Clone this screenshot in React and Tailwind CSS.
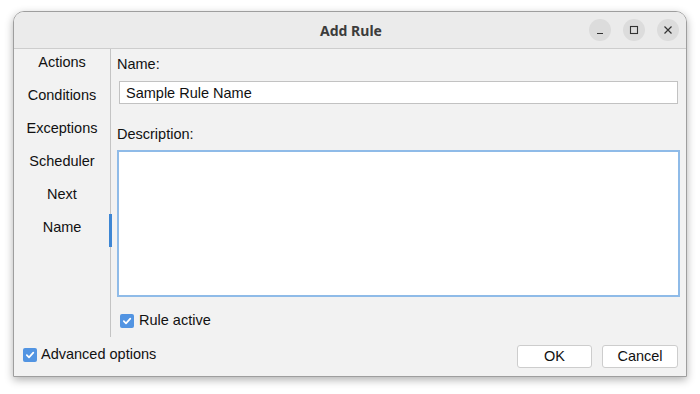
import React from 'react';

const tabs = ['Actions', 'Conditions', 'Exceptions', 'Scheduler', 'Next', 'Name'];

function Check() {
    return (
        <span className="w-[14px] h-[14px] rounded-[2px] bg-[#5294e2] flex items-center justify-center shrink-0">
            <svg width="10" height="10" viewBox="0 0 10 10" fill="none">
                <path d="M1.8 5.2 L4 7.4 L8.3 2.6" stroke="white" strokeWidth="1.7" strokeLinecap="round" strokeLinejoin="round" />
            </svg>
        </span>
    );
}

function TitleButton({ children }) {
    return (
        <div className="w-[22px] h-[22px] rounded-full bg-[#dcdcdc] flex items-center justify-center text-[#333]">
            {children}
        </div>
    );
}

export default function App() {
    const active = 'Name';

    return (
        <div className="w-[700px] h-[394px] bg-white pt-[11px] pl-[13px] font-['Liberation_Sans',Arial,sans-serif] text-[14.5px] text-[#111]">
            <div className="w-[674px] h-[366px] border border-[#9e9e9e] rounded-t-[11px] overflow-hidden flex flex-col shadow-[0_3px_8px_rgba(0,0,0,0.3)]">
                {/* title bar */}
                <div className="h-[37px] shrink-0 bg-[#ebebeb] border-b border-[#cdcdcd] grid grid-cols-[1fr_auto_1fr] items-center">
                    <div />
                    <div className="font-['Noto_Sans',sans-serif] font-bold text-[14px] text-[#3c3c3c] pl-[2px]">Add Rule</div>
                    <div className="flex justify-end gap-[12px] pr-[7px]">
                        <TitleButton>
                            <svg width="10" height="10" viewBox="0 0 10 10"><path d="M2 8.5 H8" stroke="currentColor" strokeWidth="1.2" /></svg>
                        </TitleButton>
                        <TitleButton>
                            <svg width="10" height="10" viewBox="0 0 10 10"><rect x="1.5" y="1.5" width="7" height="7" fill="none" stroke="currentColor" strokeWidth="1.1" /></svg>
                        </TitleButton>
                        <TitleButton>
                            <svg width="10" height="10" viewBox="0 0 10 10"><path d="M1.5 1.5 L8.5 8.5 M8.5 1.5 L1.5 8.5" stroke="currentColor" strokeWidth="1.2" /></svg>
                        </TitleButton>
                    </div>
                </div>

                <div className="flex-1 flex flex-col bg-[#f2f2f2]">
                    <div className="flex h-[288px]">
                        {/* sidebar */}
                        <div className="w-[97px] border-r border-[#c4c4c4] flex flex-col">
                            {tabs.map(t => (
                                <div key={t} className="relative h-[33px] pt-[4px] leading-[18px] text-center">
                                    {t}
                                    {t === active && (
                                        <span className="absolute right-[-2px] top-0 w-[3px] h-[33px] bg-[#3d86d4]" />
                                    )}
                                </div>
                            ))}
                        </div>

                        {/* content */}
                        <div className="flex-1 flex flex-col px-[6px]">
                            <div className="pt-[7px] leading-[17px]">Name:</div>
                            <input
                                readOnly
                                value="Sample Rule Name"
                                className="mt-[8px] mx-[2px] h-[23px] bg-white border border-[#c2c2c2] px-[6px] outline-none leading-[17px]"
                            />
                            <div className="mt-[22px] leading-[17px]">Description:</div>
                            <textarea
                                readOnly
                                className="mt-[7px] h-[147px] bg-white border-2 border-[#8fbbe8] resize-none outline-none"
                            />
                            <div className="mt-[15px] ml-[3px] h-[17px] flex items-center gap-[5px]">
                                <Check />
                                <span className="leading-[17px]">Rule active</span>
                            </div>
                        </div>
                    </div>

                    {/* bottom row */}
                    <div className="flex items-start justify-between pt-[8px] pl-[9px] pr-[8px]">
                        <div className="mt-[1px] h-[17px] flex items-center gap-[4px]">
                            <Check />
                            <span className="leading-[17px]">Advanced options</span>
                        </div>
                        <div className="flex gap-[10px]">
                            <button className="w-[75px] h-[23px] bg-white border border-[#cdcdcd] rounded-[3px] leading-[17px]">OK</button>
                            <button className="w-[76px] h-[23px] bg-white border border-[#cdcdcd] rounded-[3px] leading-[17px]">Cancel</button>
                        </div>
                    </div>
                </div>
            </div>
        </div>
    );
}
